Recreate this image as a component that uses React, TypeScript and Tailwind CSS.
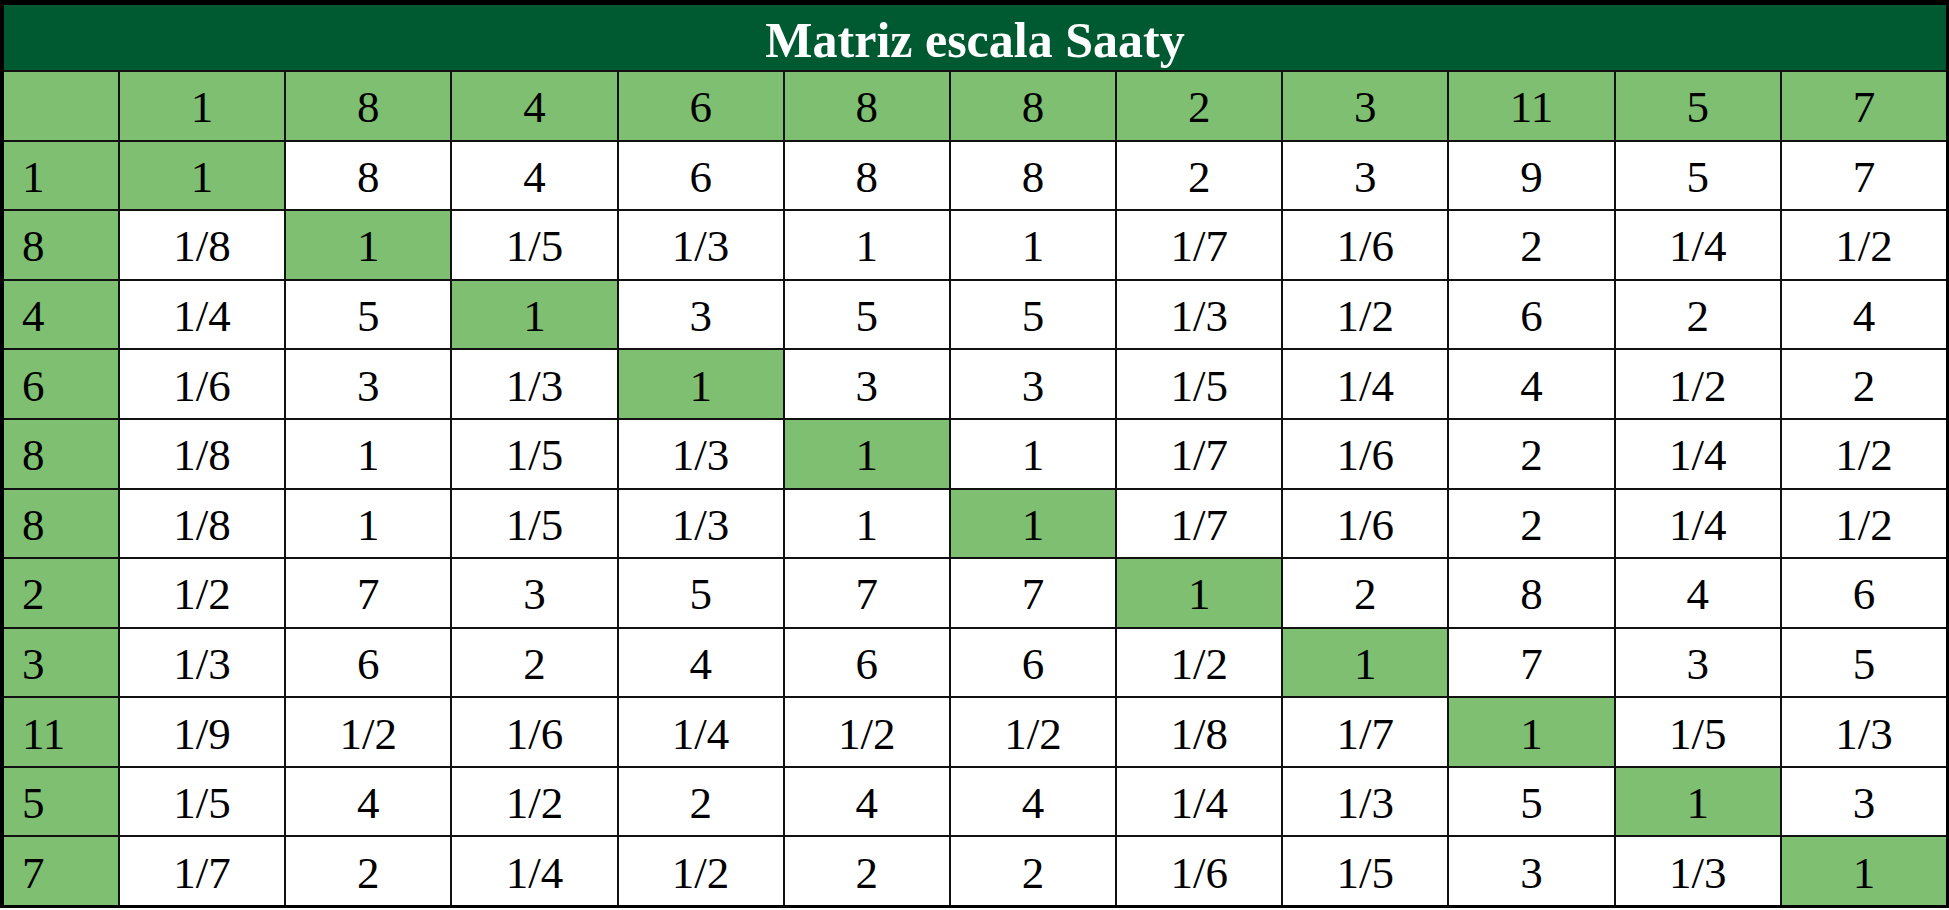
import React from 'react';

const header = ['1', '8', '4', '6', '8', '8', '2', '3', '11', '5', '7'];

const rows: string[][] = [
  ['1', '8', '4', '6', '8', '8', '2', '3', '9', '5', '7'],
  ['1/8', '1', '1/5', '1/3', '1', '1', '1/7', '1/6', '2', '1/4', '1/2'],
  ['1/4', '5', '1', '3', '5', '5', '1/3', '1/2', '6', '2', '4'],
  ['1/6', '3', '1/3', '1', '3', '3', '1/5', '1/4', '4', '1/2', '2'],
  ['1/8', '1', '1/5', '1/3', '1', '1', '1/7', '1/6', '2', '1/4', '1/2'],
  ['1/8', '1', '1/5', '1/3', '1', '1', '1/7', '1/6', '2', '1/4', '1/2'],
  ['1/2', '7', '3', '5', '7', '7', '1', '2', '8', '4', '6'],
  ['1/3', '6', '2', '4', '6', '6', '1/2', '1', '7', '3', '5'],
  ['1/9', '1/2', '1/6', '1/4', '1/2', '1/2', '1/8', '1/7', '1', '1/5', '1/3'],
  ['1/5', '4', '1/2', '2', '4', '4', '1/4', '1/3', '5', '1', '3'],
  ['1/7', '2', '1/4', '1/2', '2', '2', '1/6', '1/5', '3', '1/3', '1'],
];

export default function App() {
  return (
    <div className="w-[1949px] h-[910px] bg-white font-['Liberation_Serif',serif] leading-none">
      <div className="h-[908px] border-t-[5px] border-l-[4px] border-r-[3px] border-b-[3px] border-black">
        <div className="grid h-full grid-cols-[114px_repeat(11,minmax(0,1fr))] grid-rows-[65px_repeat(12,minmax(0,1fr))] gap-[2px] bg-[#111]">
          {/* title */}
          <div className="col-span-12 flex items-center justify-center bg-[#005a31] pt-1 text-[50px] font-bold text-white">
            Matriz escala Saaty
          </div>

          {/* header row */}
          <div className="bg-[#7fbf71]" />
          {header.map((h, i) => (
            <div key={'h' + i} className="flex items-center justify-center bg-[#7fbf71] pt-1 text-[45px] text-black">
              {h}
            </div>
          ))}

          {/* body */}
          {rows.map((row, r) => (
            <React.Fragment key={r}>
              <div className="flex items-center bg-[#7fbf71] pl-[18px] pt-1 text-[45px] text-black">{header[r]}</div>
              {row.map((v, c) => (
                <div
                  key={c}
                  className={
                    'flex items-center justify-center pt-1 text-[45px] text-black ' +
                    (r === c ? 'bg-[#7fbf71]' : 'bg-white')
                  }
                >
                  {v}
                </div>
              ))}
            </React.Fragment>
          ))}
        </div>
      </div>
    </div>
  );
}
